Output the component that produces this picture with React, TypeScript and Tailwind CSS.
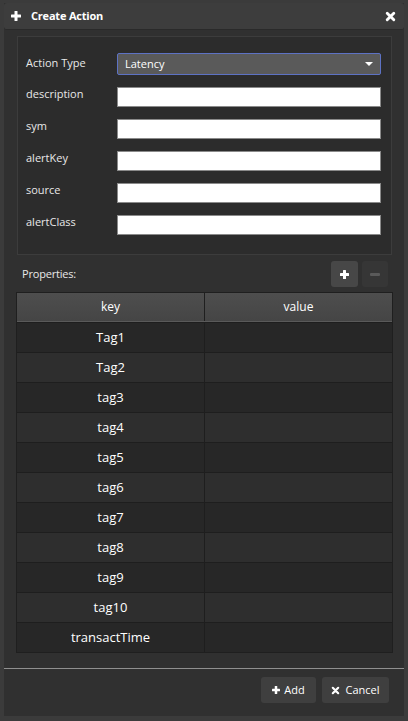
import React from "react";

const fields = ["description", "sym", "alertKey", "source", "alertClass"];
const rows = ["Tag1", "Tag2", "tag3", "tag4", "tag5", "tag6", "tag7", "tag8", "tag9", "tag10", "transactTime"];

function Plus({ size, t, className }: { size: number; t: number; className?: string }) {
  const o = (size - t) / 2;
  return (
    <svg width={size} height={size} viewBox={`0 0 ${size} ${size}`} className={className} fill="currentColor">
      <rect x={o} y={0} width={t} height={size} rx={0.5} />
      <rect x={0} y={o} width={size} height={t} rx={0.5} />
    </svg>
  );
}

function Cross({ size, t, className }: { size: number; t: number; className?: string }) {
  return (
    <svg width={size} height={size} viewBox="0 0 10 10" className={className} stroke="currentColor" strokeWidth={t} strokeLinecap="round">
      <path d="M2 2 L8 8 M8 2 L2 8" />
    </svg>
  );
}

export default function App() {
  return (
    <div
      className="w-[408px] h-[721px] bg-[#3b3b3b] pt-[3px] px-[4px] text-white"
      style={{ fontFamily: '"Open Sans", "Noto Sans", sans-serif' }}
    >
      <div className="h-[713px] bg-[#303030] flex flex-col">
        {/* header */}
        <div className="h-[27px] bg-[#3d3d3d] rounded-[3px] flex items-center px-[7px] border-b border-[#2a2a2a]">
          <Plus size={10} t={3} className="text-white" />
          <span className="ml-[10px] text-[11px] font-bold tracking-[-0.2px]">Create Action</span>
          <Cross size={11} t={2.6} className="ml-auto mr-[1px] text-white" />
        </div>

        {/* form */}
        <div className="mt-[6px] mx-[13px] w-[375px] h-[219px] border border-[#3c3c3c] bg-[#2c2c2c] pl-[8px] pr-[10px] pt-[16px] flex flex-col">
          <div className="flex items-start h-[22px]">
            <div className="w-[91px] pt-[2px] text-[11px] text-[#e8e8e8]">Action Type</div>
            <div className="flex-1 h-[22px] bg-[#5a5a5a] border border-[#5d72c4] rounded-[2px] flex items-center px-[7px]">
              <span className="text-[11px] text-white">Latency</span>
              <span className="ml-auto w-0 h-0 border-l-[4px] border-r-[4px] border-t-[4px] border-l-transparent border-r-transparent border-t-white" />
            </div>
          </div>
          {fields.map((f) => (
            <div key={f} className="mt-[12px] flex items-start h-[20px]">
              <div className="w-[91px] mt-[-1px] text-[11px] text-[#e8e8e8]">{f}</div>
              <div className="flex-1 h-[20px] bg-white border border-[#8a8a8a]" />
            </div>
          ))}
        </div>

        {/* properties */}
        <div className="mt-[6px] ml-[18px] mr-[16px] h-[26px] flex items-center">
          <span className="text-[11px] text-[#e8e8e8] tracking-[-0.2px]">Properties:</span>
          <div className="ml-auto w-[27px] h-[26px] bg-[#474747] rounded-[3px] flex items-center justify-center">
            <Plus size={9} t={3} className="text-white" />
          </div>
          <div className="ml-[4px] w-[26px] h-[26px] bg-[#363636] rounded-[3px] flex items-center justify-center">
            <div className="w-[10px] h-[3px] rounded-[1px] bg-[#5a5a5a]" />
          </div>
        </div>

        {/* table */}
        <div className="mt-[5px] ml-[12px] w-[377px] border border-[#1f1f1f]">
          <div className="flex h-[29px] bg-gradient-to-b from-[#4e4e4e] to-[#454545] border-b border-[#5a5a5a]">
            <div className="w-[188px] flex items-center justify-center text-[12px] border-r border-[#1f1f1f]">key</div>
            <div className="flex-1 flex items-center justify-center text-[12px]">value</div>
          </div>
          {rows.map((r, i) => (
            <div
              key={r}
              className={
                "flex h-[30px] border-t border-[#1e1e1e] " + (i % 2 === 0 ? "bg-[#272727]" : "bg-[#2e2e2e]")
              }
            >
              <div className="w-[188px] flex items-center justify-center text-[13px] border-r border-[#1e1e1e]">{r}</div>
              <div className="flex-1" />
            </div>
          ))}
        </div>

        {/* separator */}
        <div className="mt-[15px] h-[1px] bg-[#8f8f8f]" />

        {/* footer */}
        <div className="mt-[8px] flex justify-end gap-[6px] pr-[15px]">
          <div className="w-[55px] h-[26px] bg-[#3f3f3f] rounded-[3px] flex items-center justify-center gap-[4px] text-[11px]">
            <Plus size={8} t={2.5} />
            <span>Add</span>
          </div>
          <div className="w-[67px] h-[26px] bg-[#3f3f3f] rounded-[3px] flex items-center justify-center gap-[5px] text-[11px]">
            <Cross size={9} t={2.4} />
            <span>Cancel</span>
          </div>
        </div>
      </div>
    </div>
  );
}
